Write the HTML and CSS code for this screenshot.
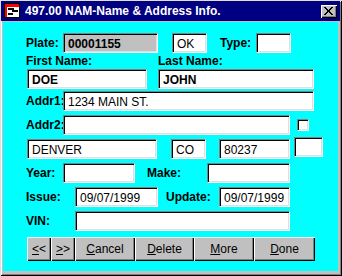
FILE: index.html
```html
<!DOCTYPE html>
<html lang="en">
<head>
    <meta charset="UTF-8">
    <title>NAM-Name &amp; Address Info.</title>
    <link rel="stylesheet" href="styles.css">
</head>
<body>
    <div class="window">
        <div class="titlebar">
            <svg class="app-icon" width="16" height="15" viewBox="0 0 16 15">
                <rect x="0" y="0" width="16" height="15" fill="#fff"/>
                <rect x="0.5" y="0.5" width="15" height="14" fill="none" stroke="#000"/>
                <rect x="1" y="1" width="14" height="3" fill="#f00"/>
                <rect x="1" y="1" width="2" height="13" fill="#f00"/>
                <rect x="4" y="5" width="6" height="2" fill="#000"/>
                <rect x="8" y="7" width="6" height="2" fill="#000"/>
                <rect x="4" y="10" width="5" height="2" fill="#000"/>
            </svg>
            <span class="title">497.00 NAM-Name &amp; Address Info.</span>
            <div class="close-btn">
                <svg width="10" height="9" viewBox="0 0 10 9">
                    <path d="M1 0 L9 8 M0 0 L8 8 M9 0 L1 8 M8 0 L0 8" stroke="#fff" stroke-width="1"/>
                </svg>
            </div>
        </div>

        <div class="client">
            <div class="row r1">
                <span class="lbl w37">Plate:</span>
                <div class="field gray bold w95">00001155</div>
                <div class="field w35 ml14">OK</div>
                <span class="lbl w36 ml13">Type:</span>
                <div class="field w35"></div>
            </div>

            <div class="row names-lbl">
                <span class="lbl w132">First Name:</span>
                <span class="lbl">Last Name:</span>
            </div>

            <div class="row r3">
                <div class="field bold w120 ml1">DOE</div>
                <div class="field bold w156 ml11">JOHN</div>
            </div>

            <div class="row r4">
                <span class="lbl w37">Addr1:</span>
                <div class="field w251">1234 MAIN ST.</div>
            </div>

            <div class="row r5">
                <span class="lbl w37">Addr2:</span>
                <div class="field w227"></div>
                <div class="checkbox"></div>
            </div>

            <div class="row r5">
                <div class="field w130 ml1">DENVER</div>
                <div class="field w35 ml14">CO</div>
                <div class="field w71 ml13">80237</div>
                <div class="field w29 extra"></div>
            </div>

            <div class="row r5">
                <span class="lbl w37">Year:</span>
                <div class="field w72"></div>
                <span class="lbl w60 ml12">Make:</span>
                <div class="field w83"></div>
            </div>

            <div class="row r5">
                <span class="lbl w49">Issue:</span>
                <div class="field w83">09/07/1999</div>
                <span class="lbl w53 ml8">Update:</span>
                <div class="field w71">09/07/1999</div>
            </div>

            <div class="row r5">
                <span class="lbl w49">VIN:</span>
                <div class="field w215"></div>
            </div>

            <div class="buttons">
                <div class="btn w24"><u>&lt;</u>&lt;</div>
                <div class="btn w24"><u>&gt;</u>&gt;</div>
                <div class="btn w60"><u>C</u>ancel</div>
                <div class="btn w59"><u>D</u>elete</div>
                <div class="btn w60"><u>M</u>ore</div>
                <div class="btn w61"><u>D</u>one</div>
            </div>
        </div>
    </div>
</body>
</html>
```

FILE: styles.css
```css
body {
    margin: 0;
    padding: 0;
    font-family: "Liberation Sans", Arial, sans-serif;
    font-size: 12px;
    background-color: #c0c0c0;
}
.window {
    width: 342px;
    height: 276px;
    box-sizing: border-box;
    background-color: #c0c0c0;
    box-shadow: inset 1px 1px #dfdfdf, inset -1px -1px #000, inset 2px 2px #fff, inset -2px -2px #808080;
    overflow: hidden;
}
.titlebar {
    margin: 1px 2px 0 1px;
    height: 20px;
    background-color: #000080;
    color: white;
    display: flex;
    align-items: center;
}
.app-icon {
    margin-left: 3px;
    margin-top: -1px;
}
.title {
    margin-left: 5px;
    font-weight: bold;
    font-size: 12px;
    flex: 1;
}
.close-btn {
    width: 16px;
    height: 13px;
    margin-right: 3px;
    box-sizing: border-box;
    background-color: #c0c0c0;
    box-shadow: inset 1px 1px #fff, inset -1px -1px #000, inset -2px -2px #808080;
    display: flex;
    align-items: center;
    justify-content: center;
}
.close-btn svg path {
    stroke: #000;
}
.client {
    margin: 1px 4px 0 3px;
    height: 249px;
    background-color: #00ffff;
    padding: 11px 0 0 23px;
    box-sizing: border-box;
}
.row {
    display: flex;
    align-items: center;
    height: 20px;
}
.names-lbl {
    height: 16px;
}
.r4 {
    margin-top: 2px;
}
.r5 {
    margin-top: 4px;
}
.lbl {
    font-weight: bold;
    color: #000;
    white-space: nowrap;
    flex-shrink: 0;
}
.field {
    height: 20px;
    box-sizing: border-box;
    background-color: #fff;
    border-top: 1px solid #808080;
    border-left: 1px solid #808080;
    border-bottom: 1px solid #fff;
    border-right: 1px solid #fff;
    box-shadow: inset 1px 1px #000, inset -1px -1px #dfdfdf;
    padding: 1px 0 0 4px;
    display: flex;
    align-items: center;
    flex-shrink: 0;
    white-space: nowrap;
    color: #000;
}
.field.gray {
    background-color: #c0c0c0;
}
.bold {
    font-weight: bold;
}
.field.extra {
    align-self: flex-start;
    margin-top: -2px;
    margin-left: 4px;
}
.checkbox {
    width: 12px;
    height: 12px;
    margin-left: 7px;
    box-sizing: border-box;
    background-color: #fff;
    border-top: 1px solid #808080;
    border-left: 1px solid #808080;
    border-bottom: 1px solid #fff;
    border-right: 1px solid #fff;
    box-shadow: inset 1px 1px #000, inset -1px -1px #dfdfdf;
}
.buttons {
    display: flex;
    margin-top: 6px;
    margin-left: 1px;
    height: 24px;
}
.btn {
    height: 24px;
    box-sizing: border-box;
    background-color: #c0c0c0;
    box-shadow: inset 1px 1px #fff, inset -1px -1px #000, inset -2px -2px #808080;
    display: flex;
    align-items: center;
    justify-content: center;
    color: #000;
}
.w24 { width: 24px; }
.w29 { width: 29px; }
.w35 { width: 35px; }
.w36 { width: 36px; }
.w37 { width: 37px; }
.w49 { width: 49px; }
.w53 { width: 53px; }
.w59 { width: 59px; }
.w60 { width: 60px; }
.w61 { width: 61px; }
.w71 { width: 71px; }
.w72 { width: 72px; }
.w83 { width: 83px; }
.w95 { width: 95px; }
.w120 { width: 120px; }
.w130 { width: 130px; }
.w132 { width: 132px; }
.w156 { width: 156px; }
.w215 { width: 215px; }
.w227 { width: 227px; }
.w251 { width: 251px; }
.ml1 { margin-left: 1px; }
.ml8 { margin-left: 8px; }
.ml11 { margin-left: 11px; }
.ml12 { margin-left: 12px; }
.ml13 { margin-left: 13px; }
.ml14 { margin-left: 14px; }
```
